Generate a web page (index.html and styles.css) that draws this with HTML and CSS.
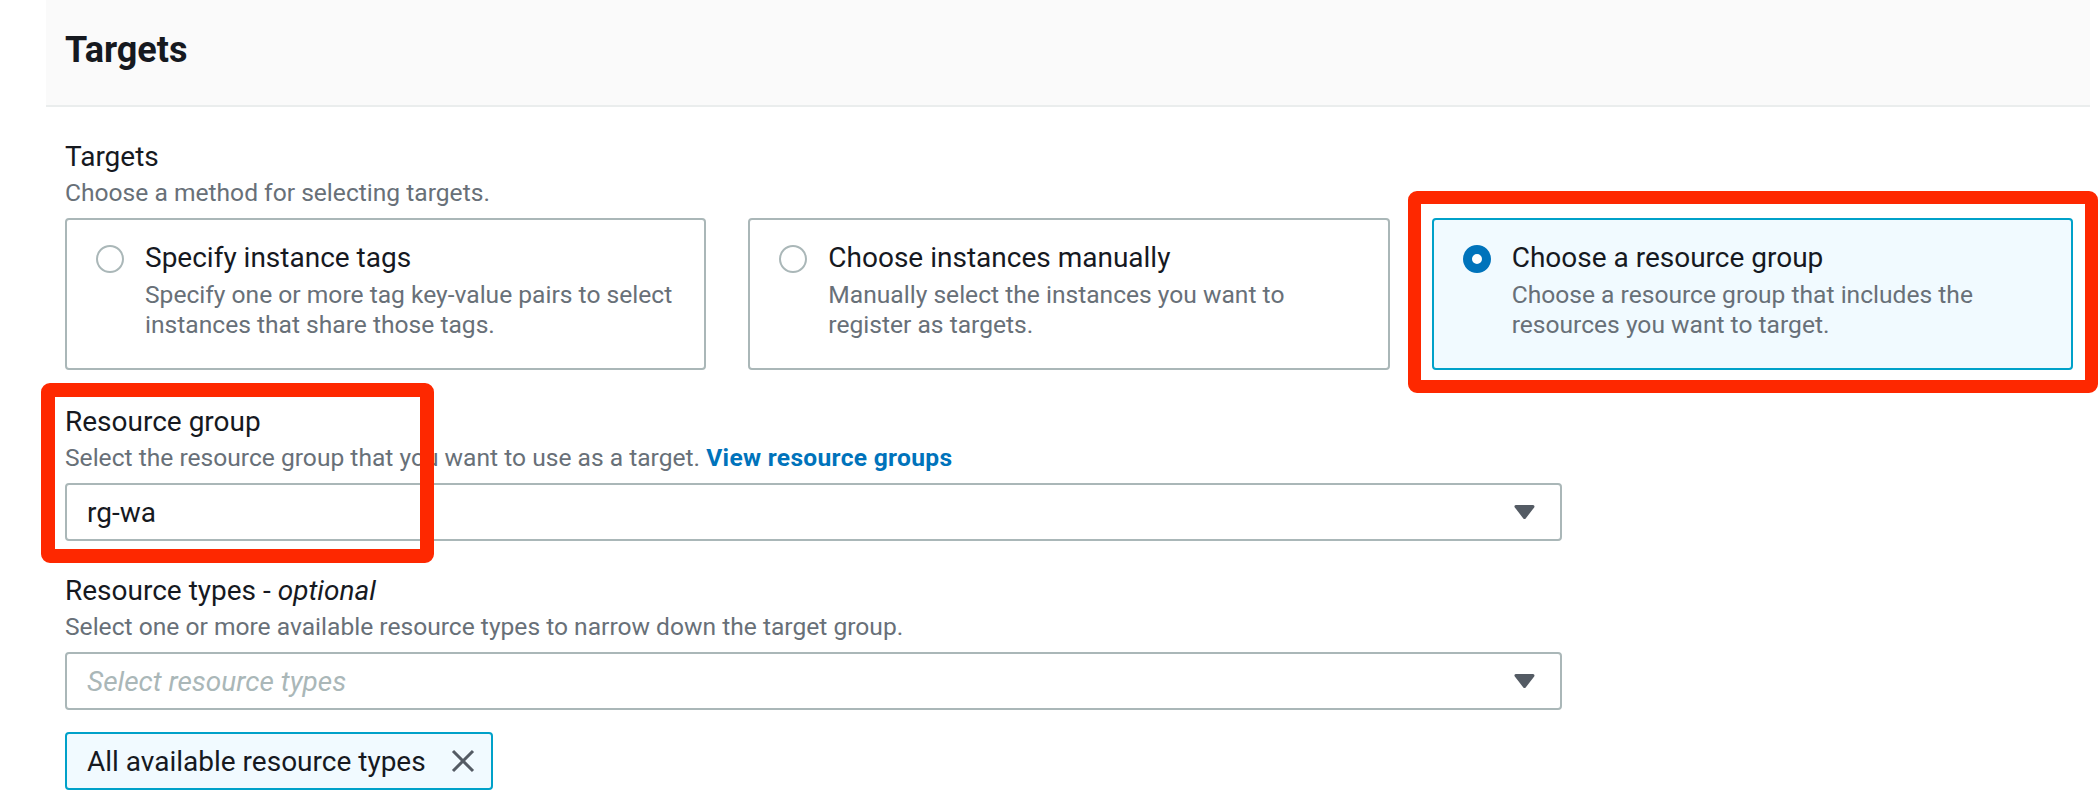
FILE: index.html
```html
<!DOCTYPE html>
<html lang="en">
<head>
<meta charset="utf-8">
<title>Targets</title>
<link rel="stylesheet" href="styles.css">
</head>
<body>
<div class="panel">
  <div class="panel-header"><h2 class="panel-title">Targets</h2></div>
  <div class="panel-body">
    <div class="field">
      <div class="label">Targets</div>
      <div class="desc">Choose a method for selecting targets.</div>
      <div class="tiles">
        <div class="tile">
          <span class="radio"></span>
          <div class="tile-text">
            <div class="tile-title">Specify instance tags</div>
            <div class="tile-desc">Specify one or more tag key-value pairs to select instances that share those tags.</div>
          </div>
        </div>
        <div class="tile">
          <span class="radio"></span>
          <div class="tile-text">
            <div class="tile-title">Choose instances manually</div>
            <div class="tile-desc">Manually select the instances you want to register as targets.</div>
          </div>
        </div>
        <div class="tile tile-selected">
          <span class="radio radio-checked"></span>
          <div class="tile-text">
            <div class="tile-title">Choose a resource group</div>
            <div class="tile-desc">Choose a resource group that includes the resources you want to target.</div>
          </div>
        </div>
      </div>
    </div>

    <div class="field field-group">
      <div class="label">Resource group</div>
      <div class="desc">Select the resource group that you want to use as a target. <a class="link" href="#">View resource groups</a></div>
      <div class="select">
        <span class="select-value">rg-wa</span>
        <svg class="caret" width="21" height="16" viewBox="0 0 21 16"><path d="M2 2.5 H19 L10.5 13.5 Z" fill="#545b64" stroke="#545b64" stroke-width="3" stroke-linejoin="round"/></svg>
      </div>
    </div>

    <div class="field field-types">
      <div class="label">Resource types - <i>optional</i></div>
      <div class="desc">Select one or more available resource types to narrow down the target group.</div>
      <div class="select">
        <span class="select-placeholder">Select resource types</span>
        <svg class="caret" width="21" height="16" viewBox="0 0 21 16"><path d="M2 2.5 H19 L10.5 13.5 Z" fill="#545b64" stroke="#545b64" stroke-width="3" stroke-linejoin="round"/></svg>
      </div>
      <div class="token">
        <span class="token-label">All available resource types</span>
        <svg class="token-x" width="26" height="26" viewBox="0 0 26 26"><path d="M3 3 L23 23 M23 3 L3 23" stroke="#545b64" stroke-width="3" fill="none"/></svg>
      </div>
    </div>
  </div>
</div>
<div class="highlight hl-tile"></div>
<div class="highlight hl-group"></div>
</body>
</html>
```

FILE: styles.css
```css
* { box-sizing: border-box; }

body {
  margin: 0;
  background: #ffffff;
  font-family: Roboto, "Liberation Sans", sans-serif;
  color: #16191f;
  position: relative;
  min-height: 806px;
}

.panel {
  margin-left: 46px;
  width: 2044px;
}

.panel-header {
  height: 107px;
  background: #fafafa;
  border-bottom: 2px solid #eaeded;
  padding: 28px 19px 0 19px;
}

.panel-title {
  margin: 0;
  font-size: 36px;
  line-height: 44px;
  font-weight: 700;
  color: #16191f;
}

.panel-body {
  padding: 30px 17px 0 19px;
}

.label {
  font-size: 28px;
  line-height: 40px;
  color: #16191f;
}

.desc {
  font-size: 24.6px;
  line-height: 32px;
  color: #687078;
}

.link {
  color: #0073bb;
  font-weight: 700;
  letter-spacing: 0.3px;
  text-decoration: none;
}

.tiles {
  margin-top: 9px;
  display: grid;
  grid-template-columns: repeat(3, 1fr);
  column-gap: 42px;
}

.tile {
  display: flex;
  align-items: flex-start;
  border: 2px solid #aab7b8;
  border-radius: 4px;
  padding: 20px 26px 28px 29px;
  background: #ffffff;
}

.tile-selected {
  border-color: #00a1c9;
  background: #f1faff;
}

.radio {
  flex: none;
  width: 28px;
  height: 28px;
  margin-top: 5px;
  margin-right: 21px;
  border: 2px solid #aab7b8;
  border-radius: 50%;
  background: #ffffff;
}

.radio-checked {
  border: 9px solid #0073bb;
}

.tile-text {
  flex: 1;
  min-width: 0;
}

.tile-title {
  font-size: 28px;
  line-height: 36px;
  color: #16191f;
}

.tile-desc {
  margin-top: 4px;
  font-size: 24.6px;
  line-height: 30px;
  color: #687078;
}

.field-group {
  margin-top: 32px;
}

.field-types {
  margin-top: 30px;
}

.select {
  margin-top: 9px;
  width: 1497px;
  height: 58px;
  border: 2px solid #aab7b8;
  border-radius: 4px;
  display: flex;
  align-items: center;
  justify-content: space-between;
  padding: 0 25px 0 20px;
  background: #ffffff;
}

.select-value {
  font-size: 28px;
  color: #16191f;
}

.select-placeholder {
  font-size: 28px;
  font-style: italic;
  color: #aab7b8;
}

.caret {
  display: block;
  flex: none;
}

.token {
  margin-top: 22px;
  display: inline-flex;
  align-items: center;
  height: 58px;
  border: 2px solid #00a1c9;
  border-radius: 4px;
  background: #f1faff;
  padding: 0 15px 0 20px;
  column-gap: 24px;
}

.token-label {
  font-size: 28px;
  color: #16191f;
}

.token-x {
  display: block;
  flex: none;
}

.highlight {
  position: absolute;
  border-style: solid;
  border-color: #fe2800;
  border-radius: 9px;
}

.hl-tile {
  left: 1408px;
  top: 191px;
  width: 690px;
  height: 202px;
  border-width: 13px;
}

.hl-group {
  left: 41px;
  top: 383px;
  width: 393px;
  height: 180px;
  border-width: 14px;
}
```
